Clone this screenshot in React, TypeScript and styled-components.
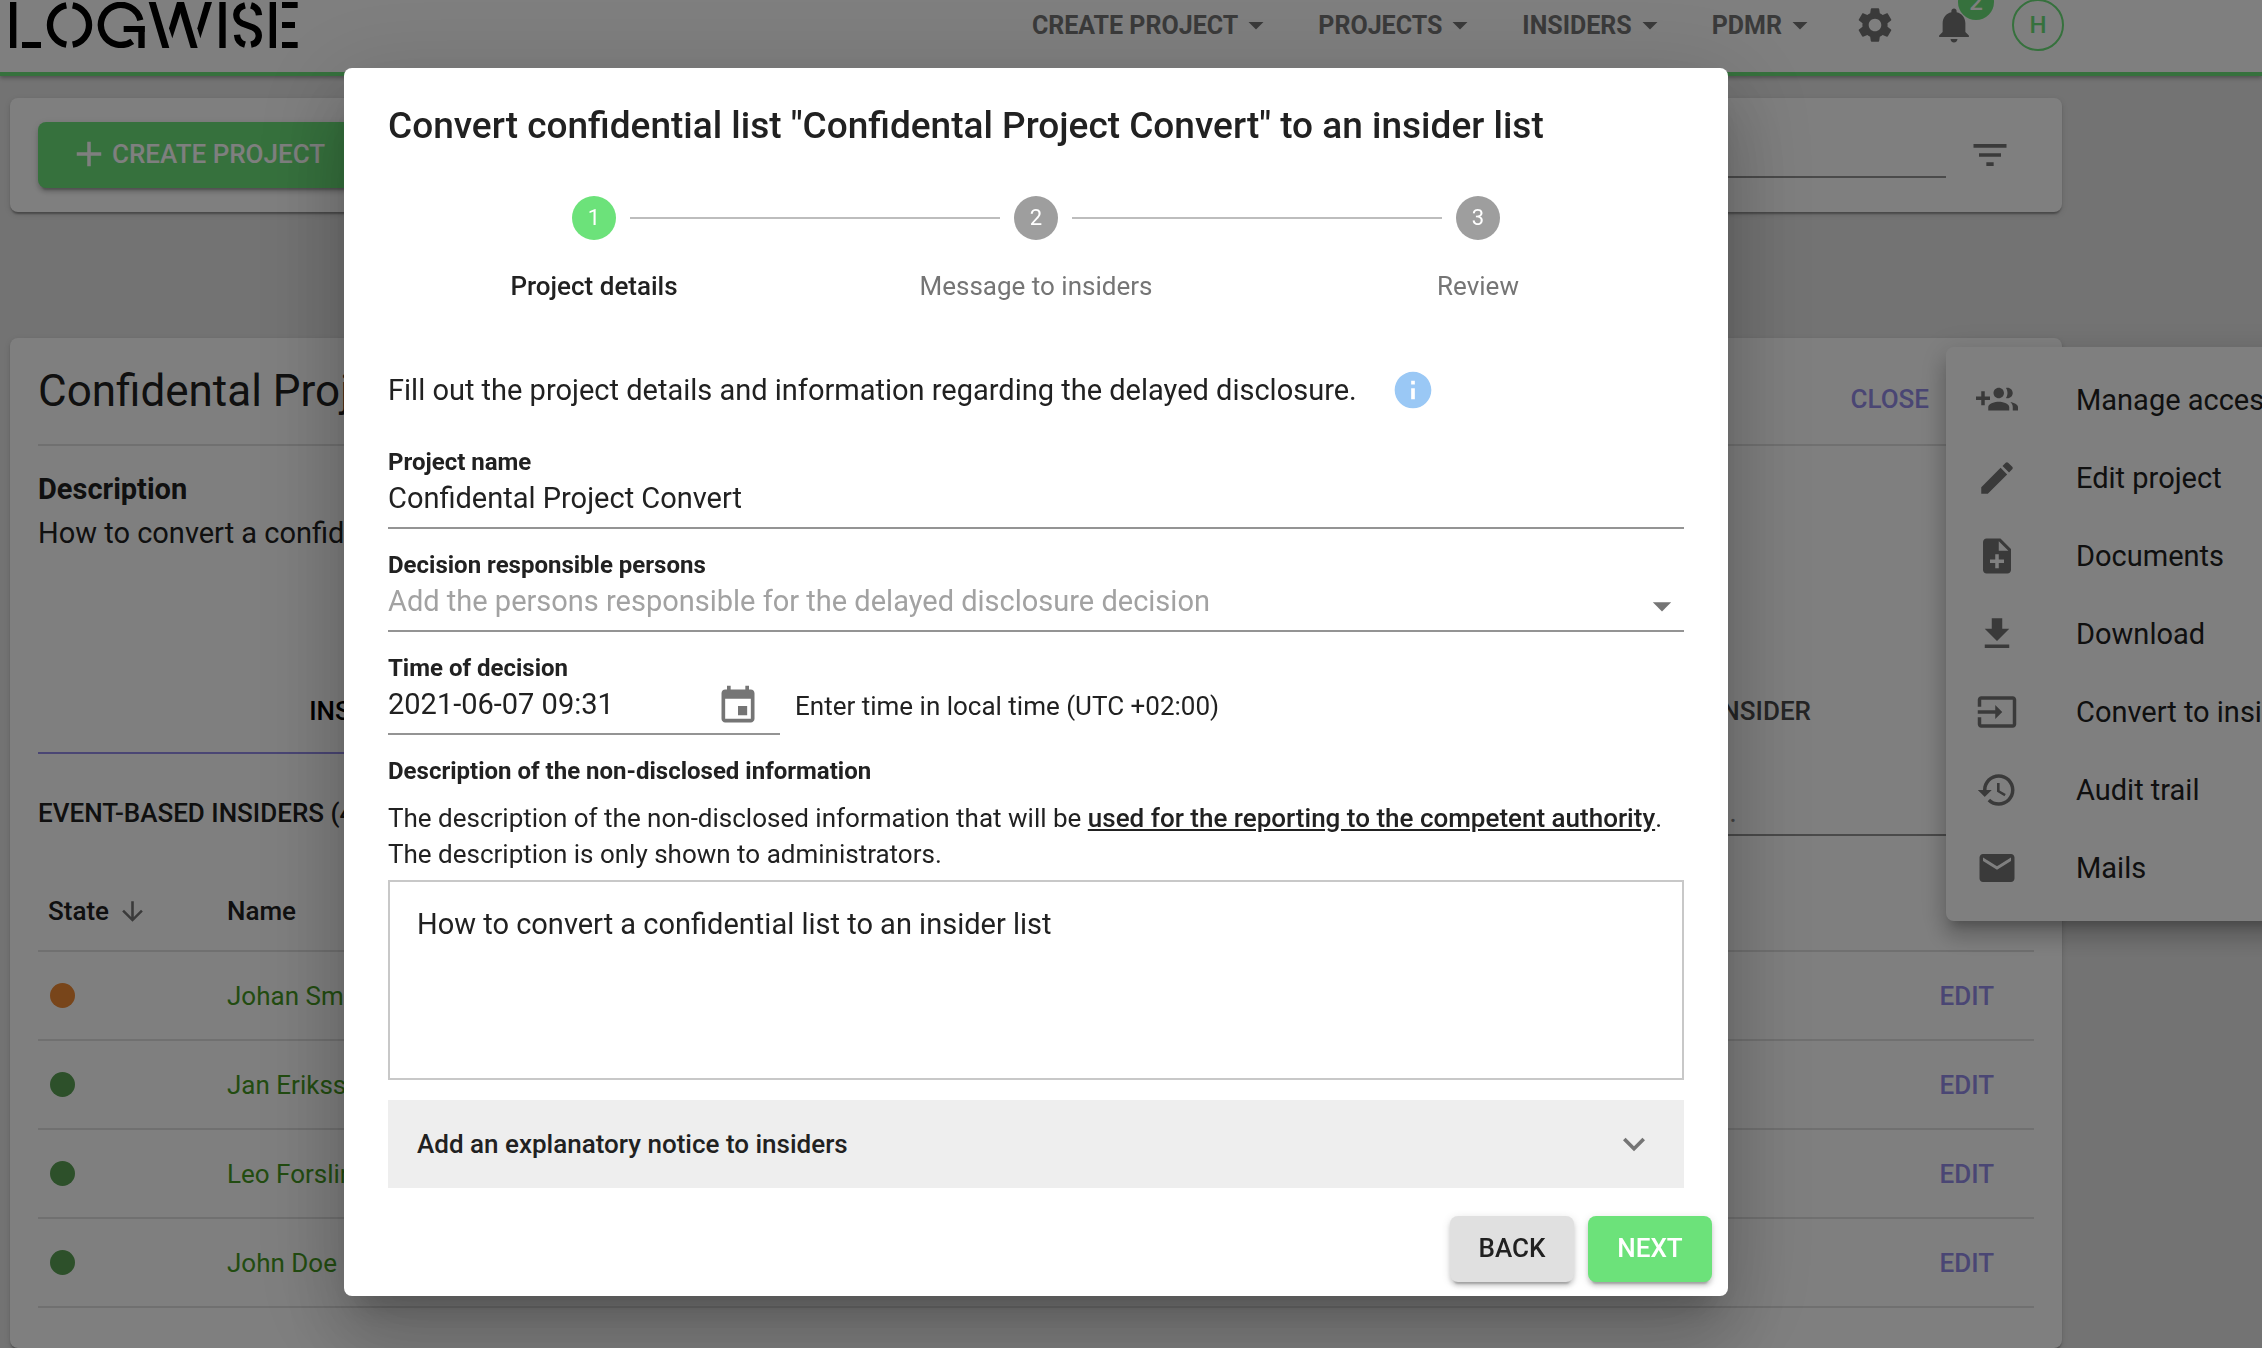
import React from "react";
import styled, { createGlobalStyle } from "styled-components";

const green = "#6ce27a";
const purple = "#948ce8";
const iconGrey = "#757575";
const ink = "#212121";

const GlobalStyle = createGlobalStyle`
  *, *::before, *::after { box-sizing: border-box; }
  body {
    margin: 0;
    background: #e6e6e6;
    color: ${ink};
    font-family: Roboto, "Liberation Sans", sans-serif;
    font-size: 29px;
  }
  button, input, select, textarea { font: inherit; color: inherit; }
  button { border: 0; background: none; padding: 0; cursor: pointer; }
  h1, h2, p, ul, ol { margin: 0; padding: 0; }
`;

const paths = {
  caret: "M7 10l5 5 5-5z",
  gear: "M19.14 12.94c.04-.3.06-.61.06-.94 0-.32-.02-.64-.07-.94l2.03-1.58c.18-.14.23-.41.12-.61l-1.92-3.32c-.12-.22-.37-.29-.59-.22l-2.39.96c-.5-.38-1.03-.7-1.62-.94l-.36-2.54c-.04-.24-.24-.41-.48-.41h-3.84c-.24 0-.43.17-.47.41l-.36 2.54c-.59.24-1.13.57-1.62.94l-2.39-.96c-.22-.08-.47 0-.59.22L2.74 8.87c-.12.21-.08.47.12.61l2.03 1.58c-.05.3-.09.63-.09.94s.02.64.07.94l-2.03 1.58c-.18.14-.23.41-.12.61l1.92 3.32c.12.22.37.29.59.22l2.39-.96c.5.38 1.03.7 1.62.94l.36 2.54c.05.24.24.41.48.41h3.84c.24 0 .44-.17.47-.41l.36-2.54c.59-.24 1.13-.56 1.62-.94l2.39.96c.22.08.47 0 .59-.22l1.92-3.32c.12-.22.07-.47-.12-.61l-2.01-1.58zM12 15.6c-1.98 0-3.6-1.62-3.6-3.6s1.62-3.6 3.6-3.6 3.6 1.62 3.6 3.6-1.62 3.6-3.6 3.6z",
  bell: "M12 22c1.1 0 2-.9 2-2h-4c0 1.1.89 2 2 2zm6.5-6v-5c0-3.2-1.9-5.64-5-6.32V4c0-.83-.67-1.5-1.5-1.5s-1.5.67-1.5 1.5v.68C7.4 5.36 5.5 7.92 5.5 11v5l-2 2v.8h17V18l-2-2z",
  plus: "M19 13h-6v6h-2v-6H5v-2h6V5h2v6h6v2z",
  filter: "M10 18h4v-2h-4v2zM3 6v2h18V6H3zm3 7h12v-2H6v2z",
  down: "M20 12l-1.41-1.41L13 16.17V4h-2v12.17l-5.58-5.59L4 12l8 8 8-8z",
  groupAdd: "M8 10H5V7H3v3H0v2h3v3h2v-3h3v-2zm10 1c1.66 0 2.99-1.34 2.99-3S19.66 5 18 5c-.32 0-.63.05-.91.14.57.81.9 1.79.9 2.86s-.34 2.04-.9 2.86c.28.09.59.14.91.14zm-5 0c1.66 0 2.99-1.34 2.99-3S14.66 5 13 5c-1.66 0-3 1.34-3 3s1.34 3 3 3zm6.62 2.16c.83.73 1.38 1.66 1.38 2.84v2h3v-2c0-1.54-2.37-2.49-4.38-2.84zM13 13c-2 0-6 1-6 3v2h12v-2c0-2-4-3-6-3z",
  pencil: "M3 17.25V21h3.75L17.81 9.94l-3.75-3.75L3 17.25zM20.71 7.04c.39-.39.39-1.02 0-1.41l-2.34-2.34c-.39-.39-1.02-.39-1.41 0l-1.83 1.83 3.75 3.75 1.83-1.83z",
  noteAdd: "M14 2H6c-1.1 0-1.99.9-1.99 2L4 20c0 1.1.89 2 1.99 2H18c1.1 0 2-.9 2-2V8l-6-6zm2 14h-3v3h-2v-3H8v-2h3v-3h2v3h3v2zm-3-7V3.5L18.5 9H13z",
  download: "M19 9h-4V3H9v6H5l7 7 7-7zM5 18v2h14v-2H5z",
  convert: "M21 3.01H3c-1.1 0-2 .9-2 2V9h2V4.99h18v14.03H3V15H1v4.01c0 1.1.9 1.98 2 1.98h18c1.1 0 2-.88 2-1.98v-14c0-1.11-.9-2-2-2zM11 16l4-4-4-4v3H1v2h10v3z",
  history: "M13 3c-4.97 0-9 4.03-9 9H1l3.89 3.89.07.14L9 12H6c0-3.87 3.13-7 7-7s7 3.13 7 7-3.13 7-7 7c-1.93 0-3.68-.79-4.94-2.06l-1.42 1.42C8.27 19.99 10.51 21 13 21c4.97 0 9-4.03 9-9s-4.03-9-9-9zm-1 5v5l4.28 2.54.72-1.21-3.5-2.08V8H12z",
  mail: "M20 4H4c-1.1 0-1.99.9-1.99 2L2 18c0 1.1.9 2 2 2h16c1.1 0 2-.9 2-2V6c0-1.1-.9-2-2-2zm0 4l-8 5-8-5V6l8 5 8-5v2z",
  info: "M12 2C6.48 2 2 6.48 2 12s4.48 10 10 10 10-4.48 10-10S17.52 2 12 2zm1 15h-2v-6h2v6zm0-8h-2V7h2v2z",
  event: "M17 12h-5v5h5v-5zM16 1v2H8V1H6v2H5c-1.11 0-1.99.9-1.99 2L3 19c0 1.1.89 2 2 2h14c1.1 0 2-.9 2-2V5c0-1.1-.9-2-2-2h-1V1h-2zm3 18H5V8h14v11z",
  chevron: "M7.41 8.59L12 13.17l4.59-4.58L18 10l-6 6-6-6 1.41-1.41z",
};

const Svg = styled.svg<{ $size: number; $color: string }>`
  width: ${(p) => p.$size}px;
  height: ${(p) => p.$size}px;
  fill: ${(p) => p.$color};
  flex: none;
  display: block;
`;

function Icon({ name, size = 42, color = iconGrey }: { name: keyof typeof paths; size?: number; color?: string }) {
  return (
    <Svg viewBox="0 0 24 24" $size={size} $color={color} aria-hidden="true">
      <path d={paths[name]} />
    </Svg>
  );
}

/* ---------- page behind the dialog ---------- */

const Page = styled.div`
  height: 100vh;
  overflow: hidden;
  display: flex;
  flex-direction: column;
`;

const Header = styled.header`
  display: flex;
  align-items: center;
  height: 76px;
  padding: 0 198px 22px 10px;
  background: #fff;
  border-bottom: 4px solid ${green};
  box-shadow: 0 2px 4px rgba(0, 0, 0, 0.3);
  flex: none;
`;

const LogoLink = styled.a`
  display: block;
  margin-right: auto;
  svg { display: block; width: 288px; height: 46px; }
`;

const Nav = styled.nav`
  display: flex;
  gap: 44px;
  margin-right: 36px;
`;

const NavButton = styled.button`
  display: flex;
  align-items: center;
  font-size: 25px;
  font-weight: 700;
  color: ${iconGrey};
`;

const HeaderIcons = styled.div`
  display: flex;
  align-items: center;
  gap: 37px;
`;

const IconButton = styled.button`
  display: block;
  position: relative;
`;

const Badge = styled.span`
  position: absolute;
  left: 25px;
  top: -20px;
  width: 36px;
  height: 36px;
  border-radius: 50%;
  background: ${green};
  color: #fff;
  font-size: 24px;
  font-weight: 500;
  line-height: 36px;
  text-align: center;
`;

const Avatar = styled.button`
  width: 52px;
  height: 52px;
  border: 2px solid ${green};
  border-radius: 50%;
  color: ${green};
  font-size: 24px;
  font-weight: 500;
`;

const Main = styled.main`
  display: flex;
  flex-direction: column;
  flex: 1;
  padding: 22px 200px 0 10px;
`;

const Card = styled.section`
  background: #fff;
  border-radius: 8px;
  box-shadow: 0 4px 2px -2px rgba(0, 0, 0, 0.2), 0 2px 2px rgba(0, 0, 0, 0.14), 0 2px 6px rgba(0, 0, 0, 0.12);
`;

const ToolCard = styled(Card)`
  display: flex;
  align-items: center;
  justify-content: space-between;
  padding: 24px 50px 24px 28px;
`;

const SearchGroup = styled.div`
  display: flex;
  align-items: center;
  gap: 22px;
`;

const SearchInput = styled.input`
  width: 700px;
  height: 46px;
  border: 0;
  border-bottom: 2px solid #949494;
  background: none;
  outline: 0;
`;

const raised = "0 6px 2px -4px rgba(0,0,0,.2), 0 4px 4px rgba(0,0,0,.14), 0 2px 10px rgba(0,0,0,.12)";

const Contained = styled.button<{ $bg: string; $fg: string }>`
  display: flex;
  align-items: center;
  justify-content: center;
  min-width: 124px;
  height: 66px;
  padding: 0 24px 2px;
  border-radius: 8px;
  background: ${(p) => p.$bg};
  color: ${(p) => p.$fg};
  font-size: 26px;
  font-weight: 500;
  box-shadow: ${raised};
`;

const CreateButton = styled(Contained)`
  gap: 2px;
  padding: 0 30px 2px;
`;

const ProjectCard = styled(Card)`
  position: relative;
  flex: 1;
  margin-top: 126px;
  padding: 0 28px;
`;

const ProjectHead = styled.div`
  display: flex;
  align-items: center;
  justify-content: space-between;
  height: 108px;
  padding-right: 105px;
  border-bottom: 2px solid #e0e0e0;
`;

const ProjectTitle = styled.h1`
  font-size: 44px;
  font-weight: 400;
`;

const HeadActions = styled.div`
  display: flex;
  padding-top: 16px;
`;

const TextButton = styled.button`
  color: ${purple};
  font-size: 26px;
  font-weight: 500;
`;

const Description = styled.div`
  padding-top: 21px;
  line-height: 44px;
`;

const Tabs = styled.div`
  display: grid;
  grid-template-columns: 1fr 1fr;
  height: 84px;
  margin-top: 115px;
`;

const Tab = styled.button<{ $active?: boolean }>`
  font-size: 26px;
  font-weight: 500;
  color: ${(p) => (p.$active ? "#000" : "#4a4a4a")};
  border-bottom: 2px solid ${(p) => (p.$active ? purple : "transparent")};
`;

const ListHead = styled.div`
  display: flex;
  align-items: center;
  justify-content: space-between;
  height: 80px;
  padding-top: 38px;
`;

const ListTitle = styled.h2`
  font-size: 26px;
  font-weight: 500;
`;

const ListSearch = styled.input`
  width: 518px;
  height: 46px;
  padding: 0;
  border: 0;
  border-bottom: 2px solid #949494;
  background: none;
  outline: 0;
  &::placeholder { color: #8a8a8a; opacity: 1; }
`;

const Table = styled.table`
  width: 100%;
  margin-top: 38px;
  border-collapse: collapse;
  font-size: 26px;
  text-align: left;
  th { height: 79px; font-weight: 500; padding: 0 10px; border-bottom: 2px solid #e0e0e0; }
  td { height: 89px; padding: 0 10px; border-bottom: 2px solid #e0e0e0; }
  th:first-child { width: 179px; }
  th:last-child, td:last-child { text-align: right; padding-right: 40px; }
`;

const SortButton = styled.button`
  display: flex;
  align-items: center;
  gap: 8px;
  font-weight: 500;
`;

const Dot = styled.span<{ $color: string }>`
  display: block;
  width: 25px;
  height: 25px;
  margin-left: 2px;
  border-radius: 50%;
  background: ${(p) => p.$color};
`;

const PersonLink = styled.a`
  color: #459822;
  text-decoration: none;
`;

const Menu = styled.ul`
  position: absolute;
  top: 9px;
  left: calc(100% - 116px);
  width: 420px;
  padding: 14px 0;
  list-style: none;
  background: #fff;
  border-radius: 8px;
  box-shadow: 0 10px 10px -6px rgba(0, 0, 0, 0.2), 0 16px 20px 2px rgba(0, 0, 0, 0.14), 0 6px 28px 4px rgba(0, 0, 0, 0.12);
`;

const MenuItem = styled.button`
  display: flex;
  align-items: center;
  gap: 58px;
  width: 100%;
  height: 78px;
  padding: 0 30px;
  white-space: nowrap;
`;

/* ---------- dialog ---------- */

const Backdrop = styled.div`
  position: fixed;
  inset: 0;
  display: flex;
  align-items: flex-start;
  justify-content: center;
  padding: 68px 190px 0 0;
  background: rgba(0, 0, 0, 0.5);
`;

const Dialog = styled.form`
  width: 100%;
  max-width: 1384px;
  background: #fff;
  border-radius: 8px;
  box-shadow: 0 22px 30px -14px rgba(0, 0, 0, 0.2), 0 48px 76px 6px rgba(0, 0, 0, 0.14), 0 18px 92px 16px rgba(0, 0, 0, 0.12);
`;

const DialogTitle = styled.h2`
  padding: 34px 44px 0;
  font-size: 37px;
  font-weight: 500;
  line-height: 48px;
`;

const Stepper = styled.ol`
  display: grid;
  grid-template-columns: repeat(3, 1fr);
  padding: 46px 29px 0;
  list-style: none;
`;

const Step = styled.li<{ $active?: boolean }>`
  display: grid;
  grid-template-columns: 1fr 44px 1fr;
  align-items: center;
  row-gap: 28px;
  font-size: 26px;
  line-height: 36px;
  font-weight: ${(p) => (p.$active ? 500 : 400)};
  color: ${(p) => (p.$active ? ink : iconGrey)};
`;

const StepLine = styled.span<{ $side: "left" | "right"; $hidden?: boolean }>`
  height: 2px;
  background: ${(p) => (p.$hidden ? "transparent" : "#bdbdbd")};
  margin-${(p) => (p.$side === "left" ? "right" : "left")}: 14px;
`;

const StepNumber = styled.span<{ $active?: boolean }>`
  height: 44px;
  border-radius: 50%;
  background: ${(p) => (p.$active ? green : "#9e9e9e")};
  color: #fff;
  font-size: 22px;
  font-weight: 400;
  line-height: 44px;
  text-align: center;
`;

const StepLabel = styled.span`
  grid-column: 1 / -1;
  text-align: center;
`;

const Body = styled.div`
  display: flex;
  flex-direction: column;
  padding: 64px 44px 0;
`;

const Intro = styled.p`
  display: flex;
  align-items: center;
  gap: 34px;
  height: 44px;
`;

const Field = styled.div`
  display: flex;
  flex-direction: column;
`;

const Fields = styled.div`
  display: flex;
  flex-direction: column;
  padding-top: 35px;
  gap: 21px;
`;

const Label = styled.label`
  font-size: 24px;
  font-weight: 700;
  line-height: 30px;
`;

const InputLine = styled.div<{ $width?: string }>`
  display: flex;
  align-items: center;
  position: relative;
  width: ${(p) => p.$width ?? "100%"};
  height: 52px;
  border-bottom: 2px solid #949494;
`;

const TextInput = styled.input`
  flex: 1;
  min-width: 0;
  height: 42px;
  margin-bottom: 8px;
  padding: 0;
  border: 0;
  background: none;
  outline: 0;
`;

const Select = styled.select`
  flex: 1;
  height: 42px;
  margin-bottom: 8px;
  padding: 0;
  border: 0;
  background: none;
  appearance: none;
  outline: 0;
  color: #a2a2a2;
`;

const SelectArrow = styled.span`
  position: absolute;
  right: 0;
  top: 4px;
  pointer-events: none;
`;

const TimeRow = styled.div`
  display: flex;
  align-items: center;
  gap: 15px;
`;

const TimeHint = styled.span`
  padding-bottom: 6px;
  font-size: 26px;
`;

const DateIcon = styled.button`
  margin: 0 20px 4px 0;
`;

const Help = styled.p`
  padding-top: 14px;
  font-size: 26px;
  line-height: 36px;
  strong {
    font-weight: 500;
    text-decoration: underline;
  }
`;

const TextArea = styled.textarea`
  display: block;
  height: 200px;
  margin-top: 8px;
  padding: 24px 27px;
  border: 2px solid #c8c8c8;
  line-height: 36px;
  outline: 0;
  resize: none;
`;

const Accordion = styled.button`
  display: flex;
  align-items: center;
  justify-content: space-between;
  height: 88px;
  margin-top: 20px;
  padding: 0 28px 0 29px;
  background: #eee;
  font-size: 26px;
  font-weight: 500;
`;

const Actions = styled.div`
  display: flex;
  justify-content: flex-end;
  gap: 14px;
  padding: 28px 16px 14px;
`;

function Logo() {
  return (
    <svg viewBox="30 6 864 138" aria-label="Logwise" role="img">
      <g>
        <rect x="30" y="6" width="19" height="138" />
        <rect x="66" y="126" width="57" height="18" />
        <rect x="371" y="78" width="63" height="18" />
        <rect x="415" y="78" width="19" height="66" />
        <polygon points="446,6 467,6 508,144 487,144" />
        <polygon points="507,85 531,6 552,6 517,115" />
        <polygon points="531,6 552,6 593,144 572,144" />
        <polygon points="592,85 615,6 636,6 601,115" />
        <rect x="658" y="6" width="19" height="138" />
        <rect x="809" y="6" width="19" height="138" />
        <rect x="846" y="6" width="47" height="18" />
        <rect x="846" y="66" width="39" height="18" />
        <rect x="846" y="126" width="47" height="18" />
      </g>
      <g fill="none" stroke="#000" strokeWidth="19">
        <path d="M199 16A60 60 0 0 0 199 134" />
        <path d="M218 16A60 60 0 0 1 218 134" />
        <path d="M421 61A60 60 0 1 0 397 124" />
        <path d="M735 16C702 24 702 60 726 70L760 83C785 95 780 129 753 134" />
        <path d="M753 16Q775 22 777 46" />
        <path d="M711 104Q713 128 735 134" />
      </g>
    </svg>
  );
}

const navItems = ["CREATE PROJECT", "PROJECTS", "INSIDERS", "PDMR"];

const people = [
  { name: "Johan Smith", color: "#f08a34" },
  { name: "Jan Eriksson", color: "#5aa054" },
  { name: "Leo Forslind", color: "#5aa054" },
  { name: "John Doe", color: "#5aa054" },
];

const menuItems: { icon: keyof typeof paths; label: string }[] = [
  { icon: "groupAdd", label: "Manage access" },
  { icon: "pencil", label: "Edit project" },
  { icon: "noteAdd", label: "Documents" },
  { icon: "download", label: "Download" },
  { icon: "convert", label: "Convert to insider list" },
  { icon: "history", label: "Audit trail" },
  { icon: "mail", label: "Mails" },
];

const steps = ["Project details", "Message to insiders", "Review"];

export default function App() {
  return (
    <>
      <GlobalStyle />
      <Page>
        <Header>
          <LogoLink href="#"><Logo /></LogoLink>
          <Nav>
            {navItems.map((item) => (
              <NavButton key={item}>
                {item}
                <Icon name="caret" size={36} />
              </NavButton>
            ))}
          </Nav>
          <HeaderIcons>
            <IconButton aria-label="Settings"><Icon name="gear" /></IconButton>
            <IconButton aria-label="Notifications">
              <Icon name="bell" />
              <Badge>2</Badge>
            </IconButton>
            <Avatar>H</Avatar>
          </HeaderIcons>
        </Header>

        <Main>
          <ToolCard>
            <CreateButton $bg={green} $fg="#fff">
              <Icon name="plus" color="#fff" />
              CREATE PROJECT
            </CreateButton>
            <SearchGroup>
              <SearchInput aria-label="Search projects" />
              <IconButton aria-label="Filter"><Icon name="filter" size={44} /></IconButton>
            </SearchGroup>
          </ToolCard>

          <ProjectCard>
            <ProjectHead>
              <ProjectTitle>Confidental Project Convert</ProjectTitle>
              <HeadActions>
                <TextButton>CLOSE</TextButton>
              </HeadActions>
            </ProjectHead>
            <Description>
              <strong>Description</strong>
              <p>How to convert a confidential list to an insider list</p>
            </Description>
            <Tabs>
              <Tab $active>INSIDERS ON THE CONFIDENTIAL LIST</Tab>
              <Tab>PERSONS NO LONGER LISTED AS THE INSIDER</Tab>
            </Tabs>
            <ListHead>
              <ListTitle>EVENT-BASED INSIDERS (4)</ListTitle>
              <ListSearch aria-label="Search insiders" placeholder="Search insiders..." />
            </ListHead>
            <Table>
              <thead>
                <tr>
                  <th><SortButton>State <Icon name="down" size={31} /></SortButton></th>
                  <th>Name</th>
                  <th aria-label="Actions" />
                </tr>
              </thead>
              <tbody>
                {people.map((p) => (
                  <tr key={p.name}>
                    <td><Dot $color={p.color} /></td>
                    <td><PersonLink href="#">{p.name}</PersonLink></td>
                    <td><TextButton>EDIT</TextButton></td>
                  </tr>
                ))}
              </tbody>
            </Table>
            <Menu>
              {menuItems.map((m) => (
                <li key={m.label}>
                  <MenuItem>
                    <Icon name={m.icon} />
                    {m.label}
                  </MenuItem>
                </li>
              ))}
            </Menu>
          </ProjectCard>
        </Main>
      </Page>

      <Backdrop>
        <Dialog role="dialog" aria-labelledby="dialog-title" onSubmit={(e) => e.preventDefault()}>
          <DialogTitle id="dialog-title">
            Convert confidential list "Confidental Project Convert" to an insider list
          </DialogTitle>
          <Stepper>
            {steps.map((label, i) => (
              <Step key={label} $active={i === 0}>
                <StepLine $side="left" $hidden={i === 0} />
                <StepNumber $active={i === 0}>{i + 1}</StepNumber>
                <StepLine $side="right" $hidden={i === steps.length - 1} />
                <StepLabel>{label}</StepLabel>
              </Step>
            ))}
          </Stepper>

          <Body>
            <Intro>
              Fill out the project details and information regarding the delayed disclosure.
              <Icon name="info" size={44} color="#9ac8f5" />
            </Intro>
            <Fields>
              <Field>
                <Label htmlFor="name">Project name</Label>
                <InputLine>
                  <TextInput id="name" defaultValue="Confidental Project Convert" />
                </InputLine>
              </Field>
              <Field>
                <Label htmlFor="persons">Decision responsible persons</Label>
                <InputLine>
                  <Select id="persons">
                    <option>Add the persons responsible for the delayed disclosure decision</option>
                  </Select>
                  <SelectArrow><Icon name="caret" size={44} /></SelectArrow>
                </InputLine>
              </Field>
              <Field>
                <Label htmlFor="time">Time of decision</Label>
                <TimeRow>
                  <InputLine $width="392px">
                    <TextInput id="time" defaultValue="2021-06-07 09:31" />
                    <DateIcon type="button" aria-label="Pick a date"><Icon name="event" size={44} /></DateIcon>
                  </InputLine>
                  <TimeHint>Enter time in local time (UTC +02:00)</TimeHint>
                </TimeRow>
              </Field>
              <Field>
                <Label htmlFor="info">Description of the non-disclosed information</Label>
                <Help>
                  The description of the non-disclosed information that will be{" "}
                  <strong>used for the reporting to the competent authority</strong>.
                  <br />
                  The description is only shown to administrators.
                </Help>
                <TextArea id="info" defaultValue="How to convert a confidential list to an insider list" />
                <Accordion type="button" aria-expanded="false">
                  Add an explanatory notice to insiders
                  <Icon name="chevron" size={44} />
                </Accordion>
              </Field>
            </Fields>
          </Body>

          <Actions>
            <Contained type="button" $bg="#e0e0e0" $fg={ink}>BACK</Contained>
            <Contained type="submit" $bg={green} $fg="#fff">NEXT</Contained>
          </Actions>
        </Dialog>
      </Backdrop>
    </>
  );
}
